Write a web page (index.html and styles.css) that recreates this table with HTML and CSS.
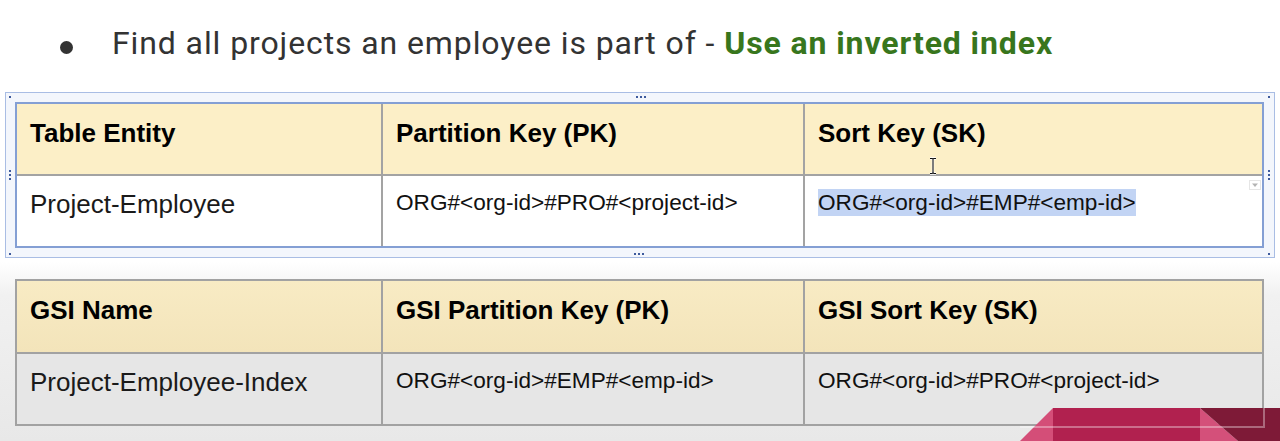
FILE: index.html
```html
<!DOCTYPE html>
<html lang="en">
<head>
<meta charset="utf-8">
<title>Inverted index</title>
<link rel="stylesheet" href="styles.css">
</head>
<body>
<div class="slide">
  <div class="title">
    <span class="bullet"></span>
    <span class="title-text">Find all projects an employee is part of - <b class="green">Use an inverted index</b></span>
  </div>

  <div class="frame">
    <span class="dot tl"></span>
    <span class="dot tr"></span>
    <span class="dot bl"></span>
    <span class="dot br"></span>
    <span class="dots h top"><i></i><i></i><i></i></span>
    <span class="dots h bottom"><i></i><i></i><i></i></span>
    <span class="dots v left"><i></i><i></i><i></i></span>
    <span class="dots v right"><i></i><i></i><i></i></span>

    <div class="grid t1">
      <div class="cell head">Table Entity</div>
      <div class="cell head">Partition Key (PK)</div>
      <div class="cell head rel">Sort Key (SK)
        <svg class="cursor" width="8" height="18" viewBox="0 0 8 18">
          <path d="M1 1.5h2.2l.8.8.8-.8H7M4 2.3v13.4M1 16.5h2.2l.8-.8.8.8H7" fill="none" stroke="#fff" stroke-width="2.4"/>
          <path d="M1 1.5h2.2l.8.8.8-.8H7M4 2.3v13.4M1 16.5h2.2l.8-.8.8.8H7" fill="none" stroke="#111" stroke-width="1.1"/>
        </svg>
      </div>
      <div class="cell body big">Project-Employee</div>
      <div class="cell body key">ORG#&lt;org-id&gt;#PRO#&lt;project-id&gt;</div>
      <div class="cell body key rel"><span class="sel">ORG#&lt;org-id&gt;#EMP#&lt;emp-id&gt;</span>
        <span class="dd"><svg width="12" height="10" viewBox="0 0 12 10"><path d="M3 3.5h6L6 7z" fill="#b4b4b4"/></svg></span>
      </div>
    </div>
  </div>

  <div class="grid t2">
    <div class="cell head">GSI Name</div>
    <div class="cell head">GSI Partition Key (PK)</div>
    <div class="cell head">GSI Sort Key (SK)</div>
    <div class="cell body big">Project-Employee-Index</div>
    <div class="cell body key">ORG#&lt;org-id&gt;#EMP#&lt;emp-id&gt;</div>
    <div class="cell body key">ORG#&lt;org-id&gt;#PRO#&lt;project-id&gt;</div>
  </div>

  <svg class="ribbon" width="260" height="33" viewBox="0 0 260 33">
    <polygon points="33,0 0,33 33,33" fill="#d44e78"/>
    <rect x="33" y="0" width="147" height="33" fill="#b1214f"/>
    <polygon points="180,0 218,33 180,33" fill="#d4507a"/>
    <polygon points="180,0 260,0 260,33 218,33" fill="#7e1a37"/>
    <path d="M0 19H244V0" fill="none" stroke="rgba(255,255,255,0.35)" stroke-width="2"/>
  </svg>
</div>
</body>
</html>
```

FILE: styles.css
```css
* { box-sizing: border-box; }

html, body {
  margin: 0;
  padding: 0;
}

body {
  width: 1280px;
  height: 441px;
  overflow: hidden;
  background: linear-gradient(180deg, #ffffff 0, #ffffff 262px, #f1f1f1 295px, #e8e8e8 441px);
  font-family: "Liberation Sans", Arial, sans-serif;
  color: #111;
}

.slide {
  position: relative;
  width: 1280px;
  height: 441px;
}

.title {
  display: flex;
  align-items: flex-start;
  height: 92px;
  padding: 25px 0 0 60px;
  font-family: Roboto, "Noto Sans", sans-serif;
  font-size: 32px;
  letter-spacing: 0.9px;
  line-height: 36px;
  color: #333;
  white-space: nowrap;
}

.bullet {
  flex: none;
  width: 13px;
  height: 13px;
  margin: 16px 39px 0 0;
  border-radius: 50%;
  background: #333;
}

.green {
  color: #38761d;
  font-weight: 700;
}

.frame {
  position: relative;
  width: 1270px;
  margin-left: 5px;
  padding: 9px 11px 9px 9px;
  border: 1px solid #a9bde4;
  background: #f3f6fc;
}

.dot {
  position: absolute;
  width: 2px;
  height: 2px;
  background: #3d5a9c;
}
.dot.tl { left: 3px; top: 3px; }
.dot.tr { left: 1262px; top: 3px; }
.dot.bl { left: 3px; top: 160px; }
.dot.br { left: 1262px; top: 160px; }

.dots {
  position: absolute;
  display: flex;
  gap: 2px;
}
.dots i {
  display: block;
  width: 2px;
  height: 2px;
  background: #3d5a9c;
}
.dots.v { flex-direction: column; }
.dots.top { left: 630px; top: 3px; }
.dots.bottom { left: 628px; top: 160px; }
.dots.left { left: 3px; top: 77px; }
.dots.right { left: 1262px; top: 77px; }

.grid {
  display: grid;
  grid-template-columns: 364px 420px 457px;
  grid-template-rows: 70px 70px;
  gap: 2px;
  width: 1249px;
}

.t1 {
  border: 2px solid #849fd4;
  background: #a3a3a3;
}

.t2 {
  grid-template-rows: 71px 70px;
  margin: 21px 0 0 15px;
  border: 2px solid #a2a2a2;
  background: #a2a2a2;
}

.cell {
  padding: 13px 0 0 13px;
  line-height: 30px;
  white-space: nowrap;
}

.rel { position: relative; }

.head {
  font-size: 26px;
  font-weight: 700;
  color: #000;
  padding-top: 14px;
}

.t1 .head { background: #fcefc7; }
.t2 .head { background: linear-gradient(180deg, #f8ebc4, #f3e4ba); padding-top: 14px; }

.t1 .body { background: #ffffff; }
.t2 .body { background: #e6e6e6; }

.big {
  font-size: 26px;
  color: #1a1a1a;
}

.key {
  font-size: 22.6px;
  padding-top: 12px;
  color: #111;
}

.t2 .big { padding-top: 13px; }

.sel {
  background: #c2d4f4;
  padding: 1px 0;
}

.cursor {
  position: absolute;
  left: 124px;
  top: 53px;
}

.dd {
  position: absolute;
  left: 444px;
  top: 4px;
  width: 12px;
  height: 10px;
  border: 1px solid #e6e6e6;
  background: #fff;
  display: flex;
}
.dd svg { display: block; margin: -1px; }

.ribbon {
  position: absolute;
  left: 1020px;
  top: 408px;
}
```
